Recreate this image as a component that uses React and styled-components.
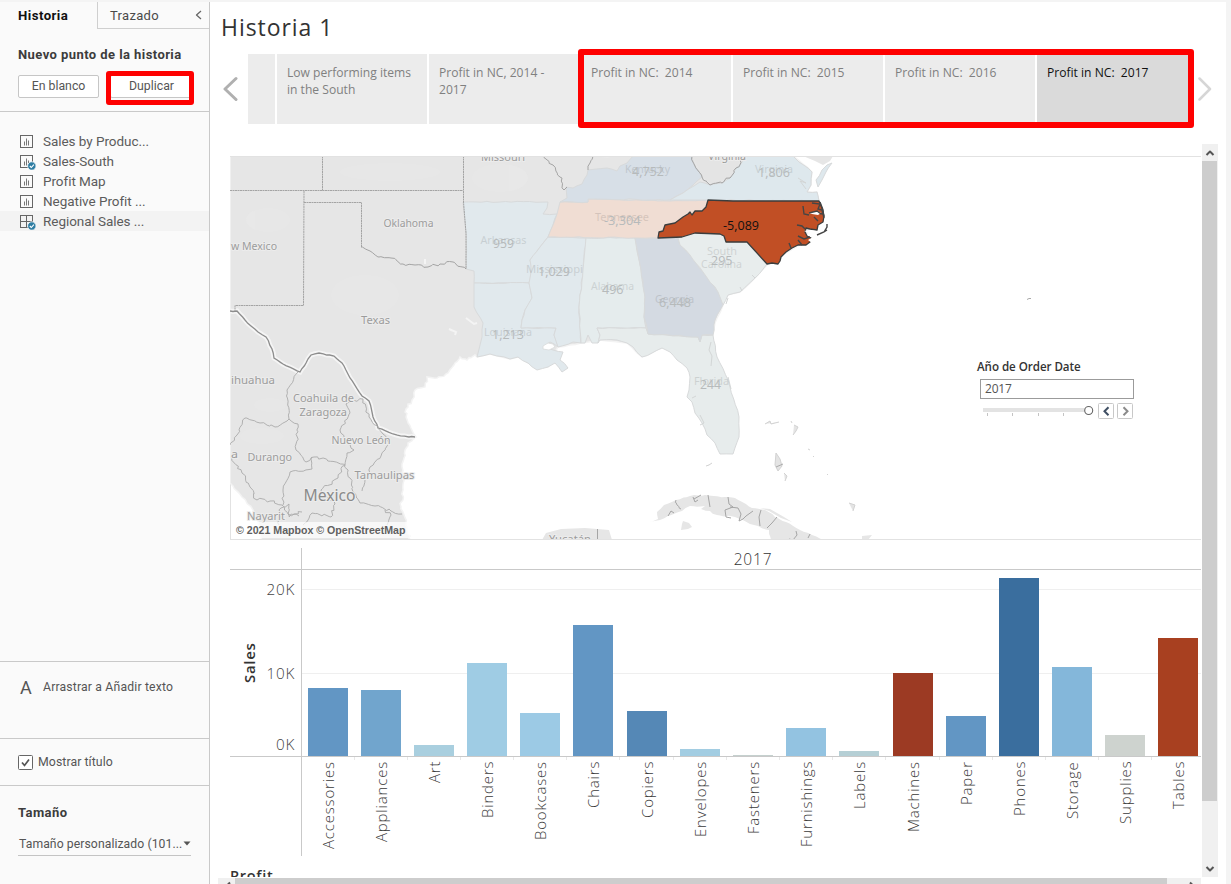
import React from 'react';
import styled, { createGlobalStyle } from 'styled-components';

const Global = createGlobalStyle`
  * { box-sizing: border-box; }
  body { margin: 0; background: #fff; overflow: hidden; }
`;

const ui = `'Roboto', 'Liberation Sans', sans-serif`;
const book = `'Open Sans', 'Noto Sans', sans-serif`;

const Shell = styled.div`
  position: relative;
  display: flex;
  width: 1231px;
  height: 884px;
  overflow: hidden;
  border-top: 2px solid #f4f4f4;
  border-right: 5px solid #f4f4f4;
  font-family: ${ui};
  color: #555;
  background: #fff;
`;

/* ---------- sidebar ---------- */
const Sidebar = styled.aside`
  display: flex;
  flex-direction: column;
  width: 210px;
  flex: none;
  background: #fafafa;
  border-right: 1px solid #c9c9c9;
`;
const Tabs = styled.div`
  display: flex;
  height: 27px;
`;
const Tab = styled.div`
  display: flex;
  align-items: center;
  justify-content: space-between;
  width: ${p => (p.$active ? 97 : 112)}px;
  padding: ${p => (p.$active ? '0 0 0 18px' : '0 7px 0 12px')};
  font-size: ${p => (p.$active ? 13.2 : 13)}px;
  font-weight: ${p => (p.$active ? 700 : 400)};
  letter-spacing: ${p => (p.$active ? 0.45 : 0.3)}px;
  color: ${p => (p.$active ? '#111' : '#4a4a4a')};
  border: solid #cfcfcf;
  border-width: ${p => (p.$active ? '0' : '0 0 1px 1px')};
`;
const NewPoint = styled.section`
  height: 83px;
  padding: 17px 0 0 18px;
  border-bottom: 1px solid #c9c9c9;
`;
const Heading = styled.div`
  font-size: 13px;
  line-height: 17px;
  font-weight: 700;
  letter-spacing: 0.43px;
  color: #3c3c3c;
`;
const Buttons = styled.div`
  display: flex;
  gap: 11px;
  margin-top: 12px;
`;
const Button = styled.div`
  width: 81px;
  height: 23px;
  border: 1px solid #c6c6c6;
  border-radius: 2px;
  background: #fff;
  font-size: 12.3px;
  line-height: 20px;
  text-align: center;
  padding-left: ${p => p.$shift || 0}px;
`;
const Sheets = styled.div`
  flex: 1;
  padding-top: 19px;
`;
const Sheet = styled.div`
  display: flex;
  align-items: center;
  height: 20px;
  padding-left: 20px;
  gap: 6px;
  font-size: 13.5px;
  letter-spacing: -0.05px;
  color: #5c5c5c;
  background: ${p => (p.$on ? '#f3f3f3' : 'transparent')};
`;
const DragText = styled.div`
  display: flex;
  height: 77px;
  padding: 17px 0 0 20px;
  gap: 12px;
  border-top: 1px solid #c9c9c9;
  font-size: 12.2px;
  line-height: 17px;
  letter-spacing: 0.18px;
`;
const BigA = styled.span`
  width: 11px;
  font-size: 18px;
`;
const ShowTitle = styled.div`
  display: flex;
  align-items: center;
  gap: 5px;
  height: 48px;
  padding-left: 18px;
  border: solid #c9c9c9;
  border-width: 1px 0;
  font-size: 12.3px;
  letter-spacing: 0.07px;
`;
const Size = styled.div`
  height: 98px;
  padding: 18px 18px 0;
`;
const Select = styled.div`
  display: flex;
  align-items: center;
  justify-content: space-between;
  height: 24px;
  margin-top: 11px;
  padding-left: 1px;
  border-bottom: 1px solid #c4c4c4;
  font-size: 12.2px;
  letter-spacing: 0.08px;
  white-space: nowrap;
`;

/* ---------- story ---------- */
const Main = styled.main`
  display: flex;
  flex-direction: column;
  flex: 1;
  min-width: 0;
  > * { flex: none; }
`;
const Title = styled.div`
  height: 52px;
  padding: 8px 0 0 11px;
  font-family: ${book};
  font-size: 23px;
  line-height: 34px;
  letter-spacing: 0.95px;
  color: #333;
`;
const Navigator = styled.div`
  display: flex;
  height: 70px;
  align-items: center;
  padding-left: 12px;
`;
const Points = styled.div`
  display: flex;
  gap: 2px;
  width: 941px;
  height: 70px;
  margin: 0 9px 0 10px;
`;
const Point = styled.div`
  width: ${p => p.$w || 150}px;
  flex: none;
  padding: 10px 10px 0;
  background: ${p => (p.$on ? '#dadada' : '#ececec')};
  color: ${p => (p.$on ? '#111' : '#808080')};
  font-family: ${book};
  font-size: 12.1px;
  line-height: 17px;
  white-space: pre-wrap;
`;
const Body = styled.div`
  display: flex;
  margin-top: 20px;
  height: 733px;
`;
const Dashboard = styled.div`
  width: 971px;
  margin-left: 20px;
  padding-top: 12px;
  overflow: hidden;
`;
const VBar = styled.div`
  display: flex;
  flex-direction: column;
  justify-content: space-between;
  align-items: center;
  width: 16px;
  height: 733px;
  margin-left: 1px;
  background: #f0f0f0;
`;
const VThumb = styled.div`
  width: 15px;
  height: 640px;
  margin-right: 1px;
  margin-bottom: 59px;
  background: #cdcdcd;
`;
const HBar = styled.div`
  display: flex;
  width: 983px;
  height: 7px;
  margin: 1px 0 0 8px;
  background: #f0f0f0;
`;
const HThumb = styled.div`
  width: 932px;
  height: 7px;
  background: #cdcdcd;
`;
const HEnd = styled.div`
  width: ${p => p.$w}px;
  height: 7px;
  overflow: hidden;
  padding-left: ${p => p.$pad}px;
`;

/* ---------- map ---------- */
const MapBox = styled.div`
  position: relative;
  height: 384px;
  border: 1px solid #e2e2e2;
  border-width: 1px 0 1px 1px;
`;
const MapSvg = styled.svg`
  display: block;
  margin: -1px 0 0 -1px;
`;
const Filter = styled.div`
  position: absolute;
  left: 746px;
  top: 202px;
  width: 160px;
  font-family: ${book};
  color: #333;
`;
const FilterTitle = styled.div`
  font-size: 11.6px;
  line-height: 16px;
  font-weight: 600;
  letter-spacing: -0.05px;
`;
const FilterInput = styled.div`
  width: 154px;
  height: 20px;
  margin: 4px 0 0 3px;
  padding-left: 4px;
  border: 1px solid #9b9b9b;
  font-size: 12px;
  line-height: 18px;
  letter-spacing: -0.2px;
  color: #555;
`;

/* ---------- chart ---------- */
const Chart = styled.div`
  display: flex;
  height: 308px;
  margin-top: 8px;
`;
const Axis = styled.div`
  width: 72px;
  border-right: 1px solid #c9c9c9;
  font-family: ${book};
`;
const AxisTop = styled.div`
  height: 22px;
  border-bottom: 1px solid #c9c9c9;
`;
const AxisBody = styled.div`
  display: flex;
  height: 187px;
  border-bottom: 1px solid #c9c9c9;
`;
const AxisTitle = styled.div`
  display: flex;
  align-items: center;
  justify-content: center;
  width: 33px;
  margin-left: 2px;
  writing-mode: vertical-rl;
  transform: rotate(180deg);
  font-size: 15px;
  font-weight: 600;
  letter-spacing: 0.7px;
  color: #333;
`;
const Ticks = styled.div`
  display: flex;
  flex-direction: column;
  width: 30px;
  padding-top: 9px;
  text-align: right;
  font-size: 15.3px;
  line-height: 20px;
  font-weight: 300;
  letter-spacing: 0.7px;
  color: #444;
`;
const Tick = styled.div`
  height: 20px;
  margin-bottom: ${p => p.$gap || 0}px;
`;
const Plot = styled.div`
  width: 899px;
  overflow: hidden;
`;
const Year = styled.div`
  height: 22px;
  padding-left: 3px;
  border-bottom: 1px solid #c9c9c9;
  font-family: ${book};
  font-size: 15.5px;
  line-height: 23px;
  font-weight: 300;
  letter-spacing: 0.8px;
  text-align: center;
  color: #333;
`;
const Bars = styled.div`
  display: flex;
  align-items: flex-end;
  height: 187px;
  padding-left: 6px;
  border-bottom: 1px solid #c9c9c9;
  background: linear-gradient(#efefef, #efefef) 0 19px / 100% 1px no-repeat,
    linear-gradient(#efefef, #efefef) 0 103px / 100% 1px no-repeat;
`;
const Bar = styled.div`
  width: 40px;
  flex: none;
  margin-right: ${p => (p.$wide ? 14 : 13)}px;
  height: ${p => p.$h}px;
  background: ${p => p.$c};
`;
const Names = styled.div`
  display: flex;
  height: 99px;
  padding-left: 6px;
`;
const Name = styled.div`
  display: flex;
  align-items: center;
  justify-content: flex-end;
  position: relative;
  width: 40px;
  height: 98px;
  padding: 0 0 4px;
  flex: none;
  margin-right: ${p => (p.$wide ? 14 : 13)}px;
  writing-mode: vertical-rl;
  transform: rotate(180deg);
  font-family: ${book};
  font-size: 15px;
  font-weight: 300;
  letter-spacing: 0.82px;
  color: #3a3a3a;
  white-space: nowrap;

  &::after {
    content: '';
    position: absolute;
    left: -7px;
    bottom: 0;
    width: 1px;
    height: 3px;
    background: #e8e8e8;
  }
`;
const Profit = styled.div`
  margin-top: 9px;
  font-family: ${book};
  font-size: 14.5px;
  line-height: 22px;
  font-weight: 600;
  letter-spacing: 0.75px;
  color: #333;
`;

/* red callouts drawn over the page */
const Callout = styled.div`
  position: absolute;
  left: ${p => p.$x}px;
  top: ${p => p.$y}px;
  width: ${p => p.$w}px;
  height: ${p => p.$h}px;
  border: ${p => p.$b || 6}px solid #fe0000;
  border-radius: 3px;
`;

function SheetIcon({ kind, used }) {
  return (
    <svg width="17" height="18" viewBox="0 0 17 18" fill="none">
      <rect x="0.5" y="3.5" width="12" height="12" stroke="#666" />
      {kind === 'dash'
        ? <path d="M6.5 3v13M0 9.5h13" stroke="#666" />
        : <path d="M4.5 9.5v4M6.5 6.5v7M8.5 8.5v5" stroke="#777" />}
      {used && (
        <g>
          <circle cx="11.8" cy="14" r="4.2" fill="#2e7da3" stroke="#fafafa" strokeWidth=".8" />
          <path d="M9.8 14l1.5 1.5 2.6-2.8" stroke="#fff" strokeWidth="1.1" />
        </g>
      )}
    </svg>
  );
}

const ChevronSvg = styled.svg`
  flex: none;
  display: block;
`;

function Chevron({ w, h, d, c, s = 1.5, cap = 'butt' }) {
  return (
    <ChevronSvg width={w} height={h} viewBox={`0 0 ${w} ${h}`} fill="none">
      <path d={d} stroke={c} strokeWidth={s} strokeLinecap={cap} strokeLinejoin="round" />
    </ChevronSvg>
  );
}

/* Turns a coarse line into a winding one, always the same for the same seed. */
function wind(pts, amp = 1.2, step = 4, seed = 7) {
  let s = seed;
  const rnd = () => {
    s = (s * 16807) % 2147483647;
    return s / 2147483647 - 0.5;
  };
  const n = pts.trim().split(/\s+/).map(p => p.split(',').map(Number));
  let d = `M${n[0]}`;
  for (let i = 1; i < n.length; i++) {
    const [x0, y0] = n[i - 1];
    const [x1, y1] = n[i];
    const k = Math.max(1, Math.round(Math.hypot(x1 - x0, y1 - y0) / step));
    for (let j = 1; j < k; j++) {
      const x = x0 + ((x1 - x0) * j) / k + rnd() * amp * 2;
      const y = y0 + ((y1 - y0) * j) / k + rnd() * amp * 2;
      d += `L${x.toFixed(1)},${y.toFixed(1)}`;
    }
    d += `L${x1},${y1}`;
  }
  return d;
}

const usCoast = '230,156 793,156 803,164 812,172 811,185 807,192 817,192 819,201 822,210 800,245 767,265 755,278 740,292 728,295 723,305 715,323 713,335 700,350 662,348 642,357 627,343 600,340 581,343 558,347 548,367 528,363 518,357 510,359 490,354 477,357';
const gulfCoast = '477,357 475,355 467,360 460,357 455,363 448,373 437,378 427,377 425,387 415,390 412,400 405,412 408,423 416,437 408,443 405,450 402,467 403,490 401,507 407,527 411,540';
const pacificCoast = '262,540 258,520 253,510 242,497 230,483';
const land = wind(usCoast, 0.4, 6) + wind(gulfCoast, 1.4, 3).replace('M', 'L') + wind(pacificCoast, 0.8, 4).replace('M', 'L') + 'Z';

const states = [
  ['#e1e9ed', '463,202 548,202 547,208 543,214 557,214 553,225 548,237 540,247 530,260 531,272 529,283 474,283 474,271 466,269 466,233'],
  ['#e1e9ed', '474,283 529,283 532,298 525,310 522,320 521,328 556,328 554,335 558,347 550,342 543,347 553,350 563,352 560,360 568,368 562,372 555,363 548,367 537,370 528,363 518,357 510,359 490,354 477,357 482,337 483,323 474,307'],
  ['#e1e9ed', '548,237 586,238 583,270 579,307 581,343 573,342 558,347 554,335 556,328 521,328 522,320 525,310 532,298 529,283 531,272 530,260 540,247'],
  ['#e5eced', '586,238 635,238 641,270 645,297 644,317 646,328 597,328 600,335 598,343 592,343 588,335 585,343 581,343 579,307 583,270'],
  ['#e7ecec', '597,328 646,328 648,334 698,337 700,342 702,335 713,335 717,357 728,380 730,387 739,417 739,437 733,454 720,454 715,443 707,435 702,423 695,413 692,402 687,397 689,390 690,377 687,368 677,360 670,352 662,348 652,353 642,357 633,347 627,343 617,340 600,340 598,343 600,335'],
  ['#d4dae2', '635,238 678,238 680,245 690,255 703,272 718,292 723,305 715,320 713,335 702,335 700,342 698,337 648,334 644,317 645,297 641,270'],
  ['#e8eded', '678,238 695,233 720,234 725,237 726,242 747,242 767,264 755,278 740,292 728,295 723,305 718,292 703,272 690,255 680,245'],
  ['#f0ddd3', '560,202 588,202 588,199 670,201 708,200 707,207 702,211 695,212 692,215 690,212 683,217 675,223 665,225 663,231 659,232 658,238 548,237 553,225 557,214'],
  ['#d7dfe7', '566,187 573,188 582,184 587,175 588,170 607,168 617,171 620,166 627,163 633,156 692,156 695,166 702,177 693,185 683,193 670,200 588,199 588,202 560,202 567,198'],
  ['#dee8ed', '670,200 683,193 700,182 710,185 722,183 730,178 736,168 741,164 745,156 793,156 799,162 812,172 811,185 807,192 817,192 819,201 708,200'],
  ['#dee8ed', '827,165 832,163 826,172 822,180 818,187 816,180 822,170'],
];

const carolina = 'M708,200 L733,201 819,201 822,208 824,216 823,222 818,225 817,230 810,229 806,228 805,232 807,236 811,238 810,242 806,245 798,245 792,248 786,252 781,257 780,261 778,264 772,263 767,264 747,242 726,242 724,236 720,234 695,233 682,237 658,238 659,232 663,231 665,225 675,223 683,217 688,214 690,212 692,215 695,211 702,211 706,207 Z';

const borders = [
  ['322.5,156 322.5,191', 0], ['230,190.5 463,190.5', 0], ['463.5,156 463.5,202 466,233 466,269', 0],
  ['304,191 303.5,305.5 235,305.5 235,311', 0], ['304,202.5 361.5,202.5 361.5,247', 0],
  ['361,247 370,251 379,257 391,258 403,264 415,265 428,267 440,264 453,262 466,269', 1.5],
  ['543,156 553,165 560,177 564,190 567,187', 1.5], ['588,170 590,163 593,156', 1],
  ['692,156 695,166 702,177 710,185 722,183 730,178 736,168 743,158', 1.5],
  ['298,372 287,390 289,419', 1], ['230,445 237,435 245,418 260,423 275,427 289,419 298,424 296,450 306,462 314,457 345,465 347,453 354,450 340,430 350,413 346,404 363,399', 1.3],
  ['363,399 369,417 383,434 390,443 381,456 370,467 368,475', 1.2],
  ['312,457 312,469 290,472 283,490 283,505', 1], ['345,465 338,478 321,490 335,504 331,517 312,513 303,525', 1.6],
  ['345,465 350,478 353,492 360,503 375,506 391,511 402,514', 1.4],
  ['232,458 242,473 250,487 257,500 270,501 282,505 289,517 302,512', 2], ['367,477 362,491', 1],
  ['279,525 281,508 289,504 288,514 299,516', 1.6], ['385,510 391,515 387,525', 1.5],
];
const rio = '230,311 237,311 245,320 251,326 258,332 266,337 272,349 274,358 283,364 300,372 306,363 311,355 319,353 334,356 344,366 350,378 362,396 369,401 373,417 378,428 393,434 409,437 415,437';

const places = [
  ['Oklahoma', 383.5, 227, 50], ['w Mexico', 231, 250, 46], ['Texas', 361, 323.5, 29],
  ['ihuahua', 231, 383.5, 44], ['Coahuila de', 293, 402, 61], ['Zaragoza', 299.5, 415.5, 47.5],
  ['Nuevo León', 331.5, 444, 59], ['Durango', 247.5, 461, 44.5], ['Tamaulipas', 354.5, 479, 60],
  ['Nayarit', 247, 519.5, 38], ['a', 231, 457.5, 7], ['Missouri', 481, 161, 44], ['Virginia', 708, 159.5, 38], ['Yucatán', 549, 543, 42],
];
const dim = [
  ['Arkansas', 480.5, 244, 46], ['Mississippi', 526, 273, 57], ['Alabama', 591, 290, 43], ['Louisiana', 484, 336, 48],
  ['Tennessee', 595, 221, 54], ['Kentucky', 625, 173, 45], ['Virginia', 755, 173, 38], ['South', 707, 255, 30],
  ['Carolina', 701, 268, 41], ['Georgia', 655, 303, 39], ['Florida', 694, 385, 35],
];
const values = [
  ['959', 493, 248, 21], ['1,029', 538, 276, 32], ['496', 602, 294, 21.5], ['1,213', 492, 339, 32], ['-3,304', 604, 225, 36.5],
  ['4,752', 632, 176, 32], ['1,806', 758, 177, 32], ['295', 711, 265, 21.5], ['6,448', 659, 307, 32], ['244', 700, 389, 21],
];

const cuba = '649,522 658,519 657,512 664,505 676,500 690,496 705,495 725,497 735,498 752,508 765,510 775,517 786,522 800,530 812,535 823,540 771,540 769,530 750,524 735,517 717,515 710,511 701,509 705,506 690,506 682,511 676,513 668,516 660,520';

const Controls = styled.svg`
  display: block;
`;

function MapView() {
  return (
    <MapBox>
      <MapSvg width="971" height="383" viewBox="230 156 971 383">
        <path d={land} fill="#e6e6e6" stroke="#f3f3f3" strokeWidth="1.5" />
        <g fill="#eaeaea" opacity=".45">
          <ellipse cx="390" cy="172" rx="50" ry="9" />
          <ellipse cx="268" cy="220" rx="22" ry="12" />
          <ellipse cx="365" cy="295" rx="34" ry="20" />
          <ellipse cx="270" cy="405" rx="16" ry="7" />
          <ellipse cx="262" cy="436" rx="22" ry="8" />
          <ellipse cx="500" cy="178" rx="28" ry="14" />
        </g>
        {states.map(([f, p], i) => (
          <path key={i} d={wind(p, 0.6, 6, i + 3) + 'Z'} fill={f} stroke="#d8dadb" strokeWidth="1" />
        ))}
        <path d="M803,156h30l-3,5-7,4-8-4z" fill="#e6e6e6" />
        <path d="M693,156h49l-7,14-10,11-13,3-10-8z" fill="#e4e4e4" />
        <path d={wind(rio, 0.6, 4)} fill="none" stroke="#f5f5f5" strokeWidth="5" />
        <path d={wind(rio, 0.6, 4)} fill="none" stroke="#8d8d8d" strokeWidth="1.3" />
        {borders.map(([p, a], i) => (
          <path key={i} d={a ? wind(p, a, 3, i + 11) : 'M' + p} fill="none" stroke={i < 9 ? '#9c9c9c' : '#aaa'} strokeWidth=".9" strokeDasharray={a ? 'none' : '2 .5'} />
        ))}
        <path d="M543,346l5-3 5,1 2,3-6,3-6-1z" fill="#fff" stroke="#d8dadb" strokeWidth=".8" />
        <path d="M711,342l-2,8 3,6-1,10 M728,377l3,12 M692,398l4-2 M700,415l4,8-4,2 M798,178l8,5-6-2 6,8 M726,304l2-6 M742,291l-2-4 M755,278l-3-3" fill="none" stroke="#d3d6d6" />
        <path d="M449,329l7,3 -1,3M466,318l8,6 3-1M425,259v5" stroke="#f4f4f4" strokeWidth="2" fill="none" />

        <path d={wind(cuba, 0.8, 4) + 'Z'} fill="#e6e6e6" />
        <path d="M546,533l15-4 24-1 24,2 3,10h-70zM683,521l6,2 3,4-4,2-7,1 1-6zM760,508l10,1 14,8 8,5-11-4-12-7zM862,536l10-1-4,5h-6z" fill="#e6e6e6" />
        <path d={wind('676,500 677,505 681,509', 1, 2)} stroke="#aaa" fill="none" />
        <path d="M668,516l3-5 3,2M693,497l2,5 3-2M701,495l-7,4M708,495l1,6 1,6M728,497l1,7 4,3-8,3 1,7 5,1M730,507l8,1 3,6-2,7 4-2 3-3 7-5M761,510l-2,7 1,9M777,517l-5,6-5,5M796,531l1,4-4,5-4-1M810,534l-2,4M597.5,529v11" stroke="#a5a5a5" fill="none" />
        <path d="M765,424l5-3 1,3 8-2M791,421l1,2M794,425l4,2-2,4-3,4M776,453l4,6 2,7-4,5-3-6zM784,473l3,3-2,5M706,466l3,-1 3-2M808,449l2,1M813,456l1,1M827,474l1,1M849,503l6,2-2,6" stroke="#d2d2d2" fill="#e4e4e4" />
        <path d="M776,467l7-3M1027,299.500l2-1 2,0" stroke="#aaa" fill="none" />

        <path d={carolina} fill="#c14f25" stroke="#3b3d3d" strokeWidth="1.3" strokeLinejoin="round" />
        <path d="M809,213l8-2 4,2-3,2-6-1zM804,231l6-1 6,1-5,3zM808,240l5-3 2,2-3,4z" fill="#fff" />
        <path d="M803,206l1,8 5,1M809,213l8-2 4,3 3-1M812,203l8,1-2,5 4,1 2,8M814,217l4,4M797,225l5,1 3,3M798,236l6,3 6-2M789,243l2,5M798,240l4,5M820,202l3,8 1,8M817,235l7-3 3-2M824,232l3-5v-3" fill="none" stroke="#454545" strokeWidth="1.4" />

        <g fontFamily="Noto Sans, Open Sans, sans-serif" fontSize="11" fill="#9c9c9c" stroke="#ececec" strokeWidth="2" paintOrder="stroke">
          {places.map(([t, x, y, w]) => (
            <text key={t} x={x} y={y} textLength={w} lengthAdjust="spacingAndGlyphs">{t}</text>
          ))}
          <text x="303.5" y="500.5" textLength="52" lengthAdjust="spacingAndGlyphs" fontSize="15.5" fill="#8a8a8a">Mexico</text>
        </g>
        <g fontFamily="Noto Sans, Open Sans, sans-serif" fontSize="11" fill="#000" opacity=".11">
          {dim.map(([t, x, y, w]) => (
            <text key={t} x={x} y={y} textLength={w} lengthAdjust="spacingAndGlyphs">{t}</text>
          ))}
        </g>
        <g fontFamily="Open Sans, Noto Sans, sans-serif" fontSize="12.5" fill="#b6babb">
          {values.map(([t, x, y, w]) => (
            <text key={t} x={x} y={y} textLength={w} lengthAdjust="spacingAndGlyphs">{t}</text>
          ))}
          <text x="723" y="230" textLength="36" lengthAdjust="spacingAndGlyphs" fill="#111">-5,089</text>
        </g>
        <rect x="232" y="522" width="178" height="16" fill="#fff" opacity=".7" />
        <text x="236" y="534" textLength="169.5" lengthAdjust="spacingAndGlyphs" fontFamily="Liberation Sans, sans-serif" fontSize="10.5" fontWeight="700" fill="#606060">© 2021 Mapbox © OpenStreetMap</text>
        <path d="M230,156.5h971" stroke="#e2e2e2" />
      </MapSvg>
      <Filter>
        <FilterTitle>Año de Order Date</FilterTitle>
        <FilterInput>2017</FilterInput>
        <Controls width="160" height="20" viewBox="0 0 160 20" fill="none">
          <rect x="6" y="9" width="102" height="4" fill="#e3e3e3" />
          <path d="M10.5 14v3M35.5 14v3M61.5 14v3M86.5 14v3" stroke="#c4c4c4" />
          <circle cx="111.7" cy="11.5" r="4" fill="#fff" stroke="#666" strokeWidth="1.1" />
          <rect x="121.5" y="4.5" width="15" height="15" rx="1" fill="#fff" stroke="#c8c8c8" />
          <rect x="140.5" y="4.5" width="15" height="15" rx="1" fill="#fff" stroke="#c8c8c8" />
          <path d="M131.5 8.2l-4 4 4 4" stroke="#3f4f63" strokeWidth="2" />
          <path d="M146.5 8.2l4 4-4 4" stroke="#8b8b8b" strokeWidth="2" />
        </Controls>
      </Filter>
    </MapBox>
  );
}

const bars = [
  ['Accessories', 68, '#6296c4'], ['Appliances', 66, '#71a5cd'], ['Art', 11, '#a9cfdf'], ['Binders', 93, '#9fcce4'],
  ['Bookcases', 43, '#9ccae5'], ['Chairs', 131, '#6296c4'], ['Copiers', 45, '#5588b6'], ['Envelopes', 7, '#a2cde2'],
  ['Fasteners', 1, '#c5d0ce'], ['Furnishings', 28, '#93c3e1'], ['Labels', 5, '#b5cfd5'], ['Machines', 83, '#9c3a23'],
  ['Paper', 40, '#6296c4'], ['Phones', 178, '#3a6e9e'], ['Storage', 89, '#84b7da'], ['Supplies', 21, '#ced3cf'],
  ['Tables', 118, '#a84020'],
];
const isWide = i => i === 5 || i === 10;

const sheets = [
  ['Sales by Produc...'], ['Sales-South', 'sheet', true], ['Profit Map'], ['Negative Profit ...'],
  ['Regional Sales ...', 'dash', true],
];

export default function App() {
  return (
    <Shell>
      <Global />
      <Sidebar>
        <Tabs>
          <Tab $active>Historia</Tab>
          <Tab>
            Trazado
            <Chevron w={7} h={10} d="M6 1L1.5 5 6 9" c="#666" s={1.3} />
          </Tab>
        </Tabs>
        <NewPoint>
          <Heading>Nuevo punto de la historia</Heading>
          <Buttons>
            <Button>En blanco</Button>
            <Button $shift={2}>Duplicar</Button>
          </Buttons>
        </NewPoint>
        <Sheets>
          {sheets.map(([t, kind, used]) => (
            <Sheet key={t} $on={kind === 'dash'}>
              <SheetIcon kind={kind} used={used} />
              {t}
            </Sheet>
          ))}
        </Sheets>
        <DragText><BigA>A</BigA>Arrastrar a Añadir texto</DragText>
        <ShowTitle>
          <svg width="15" height="15" viewBox="0 0 15 15" fill="none">
            <rect x=".5" y=".5" width="14" height="14" rx="1" fill="#fff" stroke="#666" />
            <path d="M4 7.5l2.5 3 4.5-6" stroke="#555" strokeWidth="1.7" />
          </svg>
          Mostrar título
        </ShowTitle>
        <Size>
          <Heading>Tamaño</Heading>
          <Select>
            Tamaño personalizado (101...
            <svg width="8" height="5" viewBox="0 0 8 5"><path d="M.5.5h7L4 4.5z" fill="#555" /></svg>
          </Select>
        </Size>
      </Sidebar>

      <Main>
        <Title>Historia 1</Title>
        <Navigator>
          <Chevron w={16} h={26} d="M14 2.5L3 13 14 23.5" c="#b0b0b0" s={3} cap="round" />
          <Points>
            <Point $w={27} />
            <Point>{'Low performing items\nin the South'}</Point>
            <Point>{'Profit in NC, 2014 -\n2017'}</Point>
            <Point>{'Profit in NC:  2014'}</Point>
            <Point>{'Profit in NC:  2015'}</Point>
            <Point>{'Profit in NC:  2016'}</Point>
            <Point $on $w={152}>{'Profit in NC:  2017'}</Point>
          </Points>
          <Chevron w={14} h={26} d="M1.5 2.5L12 13 1.5 23.5" c="#d6d6d6" s={2.5} cap="round" />
        </Navigator>
        <Body>
          <Dashboard>
            <MapView />
            <Chart>
              <Axis>
                <AxisTop />
                <AxisBody>
                  <AxisTitle>Sales</AxisTitle>
                  <Ticks>
                    <Tick $gap={64}>20K</Tick>
                    <Tick $gap={51}>10K</Tick>
                    <Tick>0K</Tick>
                  </Ticks>
                </AxisBody>
              </Axis>
              <Plot>
                <Year>2017</Year>
                <Bars>
                  {bars.map(([n, h, c], i) => <Bar key={n} $h={h} $c={c} $wide={isWide(i)} />)}
                </Bars>
                <Names>
                  {bars.map(([n], i) => <Name key={n} $wide={isWide(i)}>{n}</Name>)}
                </Names>
              </Plot>
            </Chart>
            <Profit>Profit</Profit>
          </Dashboard>
          <VBar>
            <Chevron w={16} h={17} d="M4.5 11L8 7.5 11.5 11" c="#555" s={2} />
            <VThumb />
            <Chevron w={16} h={17} d="M4.5 7L8 10.5 11.5 7" c="#555" s={2} />
          </VBar>
        </Body>
        <HBar>
          <HEnd $w={17} $pad={7}><Chevron w={6} h={12} d="M5 4.5L1.5 8 5 11.5" c="#555" s={2} /></HEnd>
          <HThumb />
          <HEnd $w={34} $pad={22}><Chevron w={6} h={12} d="M1 4.5L4.5 8 1 11.5" c="#555" s={2} /></HEnd>
        </HBar>
      </Main>

      <Callout $x={106} $y={69} $w={88} $h={34} $b={5.5} />
      <Callout $x={578} $y={47} $w={616} $h={79} />
    </Shell>
  );
}
